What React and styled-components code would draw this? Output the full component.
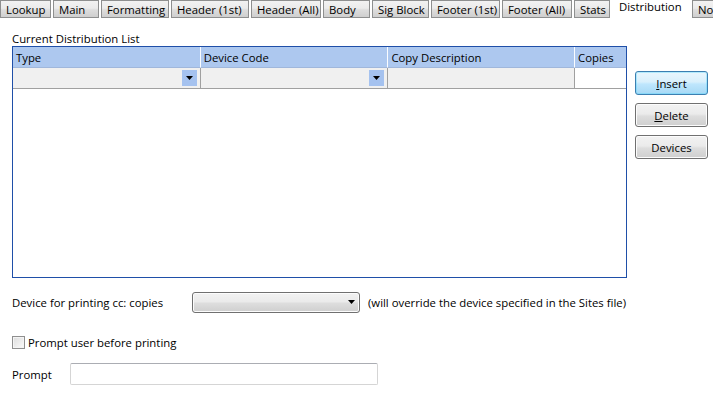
import React from "react";
import styled, { createGlobalStyle } from "styled-components";

const GlobalStyle = createGlobalStyle`
  html, body {
    margin: 0;
    padding: 0;
    background: #ffffff;
  }
  body {
    font-family: "Open Sans", "Noto Sans", sans-serif;
    font-size: 11.35px;
    color: #000;
  }
`;

const tabs = [
  { label: "Lookup", width: 51 },
  { label: "Main", width: 46 },
  { label: "Formatting", width: 68 },
  { label: "Header (1st)", width: 78 },
  { label: "Header (All)", width: 70 },
  { label: "Body", width: 47 },
  { label: "Sig Block", width: 57 },
  { label: "Footer (1st)", width: 69 },
  { label: "Footer (All)", width: 70 },
  { label: "Stats", width: 36 },
  { label: "Distribution", width: 78, active: true },
  { label: "Notes", width: 40 },
];

const columns = [
  { label: "Type", width: 188, combo: true },
  { label: "Device Code", width: 188, combo: true },
  { label: "Copy Description", width: 187 },
  { label: "Copies", width: 51, white: true },
];

const Page = styled.div`
  width: 713px;
  height: 397px;
  overflow: hidden;
  display: flex;
  flex-direction: column;
`;

const TabStrip = styled.div`
  display: flex;
  align-items: flex-start;
  height: 18px;
  gap: 2px;
  white-space: nowrap;
`;

const Tab = styled.div`
  flex: 0 0 auto;
  width: ${(p) => p.$width}px;
  box-sizing: border-box;
  height: 18px;
  padding: 1px 0 0 5px;
  line-height: 15px;
  overflow: hidden;
  background: linear-gradient(#f2f2f2 0%, #ebebeb 45%, #dddddd 55%, #cfcfcf 100%);
  border: 1px solid #8e8f8f;
  ${(p) =>
    p.$active &&
    `
    background: #ffffff;
    border: none;
    line-height: 13px;
    padding: 0 0 0 7px;
  `}
`;

const Body = styled.div`
  display: flex;
  padding: 14px 0 0 12px;
  gap: 8px;
`;

const Left = styled.div`
  display: flex;
  flex-direction: column;
`;

const Caption = styled.div`
  height: 14px;
  line-height: 14px;
`;

const Grid = styled.div`
  width: 615px;
  height: 232px;
  box-sizing: border-box;
  border: 1px solid #1f4fa8;
  background: #fff;
`;

const GridRow = styled.div`
  display: flex;
  height: ${(p) => p.$h}px;
`;

const HeadCell = styled.div`
  width: ${(p) => p.$width}px;
  box-sizing: border-box;
  background: #adc8ef;
  border-right: 1px solid #fafcff;
  border-bottom: 1px solid #a0b7db;
  padding-left: 3px;
  line-height: 21px;
  &:last-child {
    border-right: none;
  }
`;

const EditCell = styled.div`
  width: ${(p) => p.$width}px;
  box-sizing: border-box;
  background: ${(p) => (p.$white ? "#ffffff" : "#f0f0f0")};
  border-right: 1px solid #a0a0a0;
  border-bottom: 1px solid #a0a0a0;
  display: flex;
  justify-content: flex-end;
  align-items: center;
  padding-right: 3px;
  &:last-child {
    border-right: none;
  }
`;

const ComboButton = styled.div`
  width: 15px;
  height: 16px;
  background: #a5c2ef;
  display: flex;
  align-items: center;
  justify-content: center;
`;

const Side = styled.div`
  display: flex;
  flex-direction: column;
  gap: 8px;
  padding-top: 39px;
`;

const Button = styled.button`
  width: 73px;
  height: 24px;
  box-sizing: border-box;
  font: inherit;
  color: #000;
  border-radius: 3px;
  border: 1px solid ${(p) => (p.$focused ? "#3c7fb1" : "#707070")};
  background: ${(p) =>
    p.$focused
      ? "linear-gradient(#eaf6fd 0%, #d9f0fc 45%, #bee6fd 55%, #a7d9f5 100%)"
      : "linear-gradient(#f2f2f2 0%, #ebebeb 45%, #dddddd 55%, #cfcfcf 100%)"};
  box-shadow: inset 0 0 0 1px ${(p) => (p.$focused ? "#48d4fc55" : "#fcfcfc")};
  padding: 0;
  u {
    text-decoration: underline;
  }
`;

const FormRow = styled.div`
  display: flex;
  align-items: center;
  padding-left: 12px;
  height: ${(p) => p.$h}px;
  margin-top: ${(p) => p.$mt}px;
`;

const Label = styled.span`
  width: ${(p) => (p.$width ? `${p.$width}px` : "auto")};
  flex: 0 0 auto;
`;

const Select = styled.div`
  width: 168px;
  height: 21px;
  box-sizing: border-box;
  border: 1px solid #707070;
  border-radius: 3px;
  background: linear-gradient(#f2f2f2 0%, #ebebeb 45%, #dddddd 55%, #cfcfcf 100%);
  box-shadow: inset 0 0 0 1px #fcfcfc;
  display: flex;
  justify-content: flex-end;
  align-items: center;
  padding-right: 4px;
  margin-right: 8px;
`;

const Check = styled.span`
  width: 13px;
  height: 13px;
  box-sizing: border-box;
  border: 1px solid #8f8f8f;
  background: linear-gradient(135deg, #dcdcdc, #fbfbfb);
  box-shadow: inset 0 0 0 1px #f4f4f4;
  margin-right: 3px;
`;

const TextInput = styled.div`
  width: 308px;
  height: 22px;
  box-sizing: border-box;
  border: 1px solid #d5d5d5;
  border-top-color: #abadb3;
  border-radius: 2px;
  background: #fff;
`;

const Arrow = ({ color = "#000" }) => (
  <svg width="7" height="4" viewBox="0 0 7 4">
    <path d="M0 0h7L3.5 4z" fill={color} />
  </svg>
);

export default function App() {
  return (
    <Page>
      <GlobalStyle />
      <TabStrip>
        {tabs.map((t) => (
          <Tab key={t.label} $width={t.width} $active={t.active}>
            {t.label}
          </Tab>
        ))}
      </TabStrip>
      <Body>
        <Left>
          <Caption>Current Distribution List</Caption>
          <Grid>
            <GridRow $h={21}>
              {columns.map((c) => (
                <HeadCell key={c.label} $width={c.width}>
                  {c.label}
                </HeadCell>
              ))}
            </GridRow>
            <GridRow $h={21}>
              {columns.map((c) => (
                <EditCell key={c.label} $width={c.width} $white={c.white}>
                  {c.combo && (
                    <ComboButton>
                      <Arrow />
                    </ComboButton>
                  )}
                </EditCell>
              ))}
            </GridRow>
          </Grid>
        </Left>
        <Side>
          <Button $focused>
            <u>I</u>nsert
          </Button>
          <Button>
            <u>D</u>elete
          </Button>
          <Button>Devices</Button>
        </Side>
      </Body>
      <FormRow $h={22} $mt={13}>
        <Label $width={180}>Device for printing cc: copies</Label>
        <Select>
          <Arrow />
        </Select>
        <Label>(will override the device specified in the Sites file)</Label>
      </FormRow>
      <FormRow $h={16} $mt={21}>
        <Check />
        <Label>Prompt user before printing</Label>
      </FormRow>
      <FormRow $h={22} $mt={13}>
        <Label $width={58}>Prompt</Label>
        <TextInput />
      </FormRow>
    </Page>
  );
}
